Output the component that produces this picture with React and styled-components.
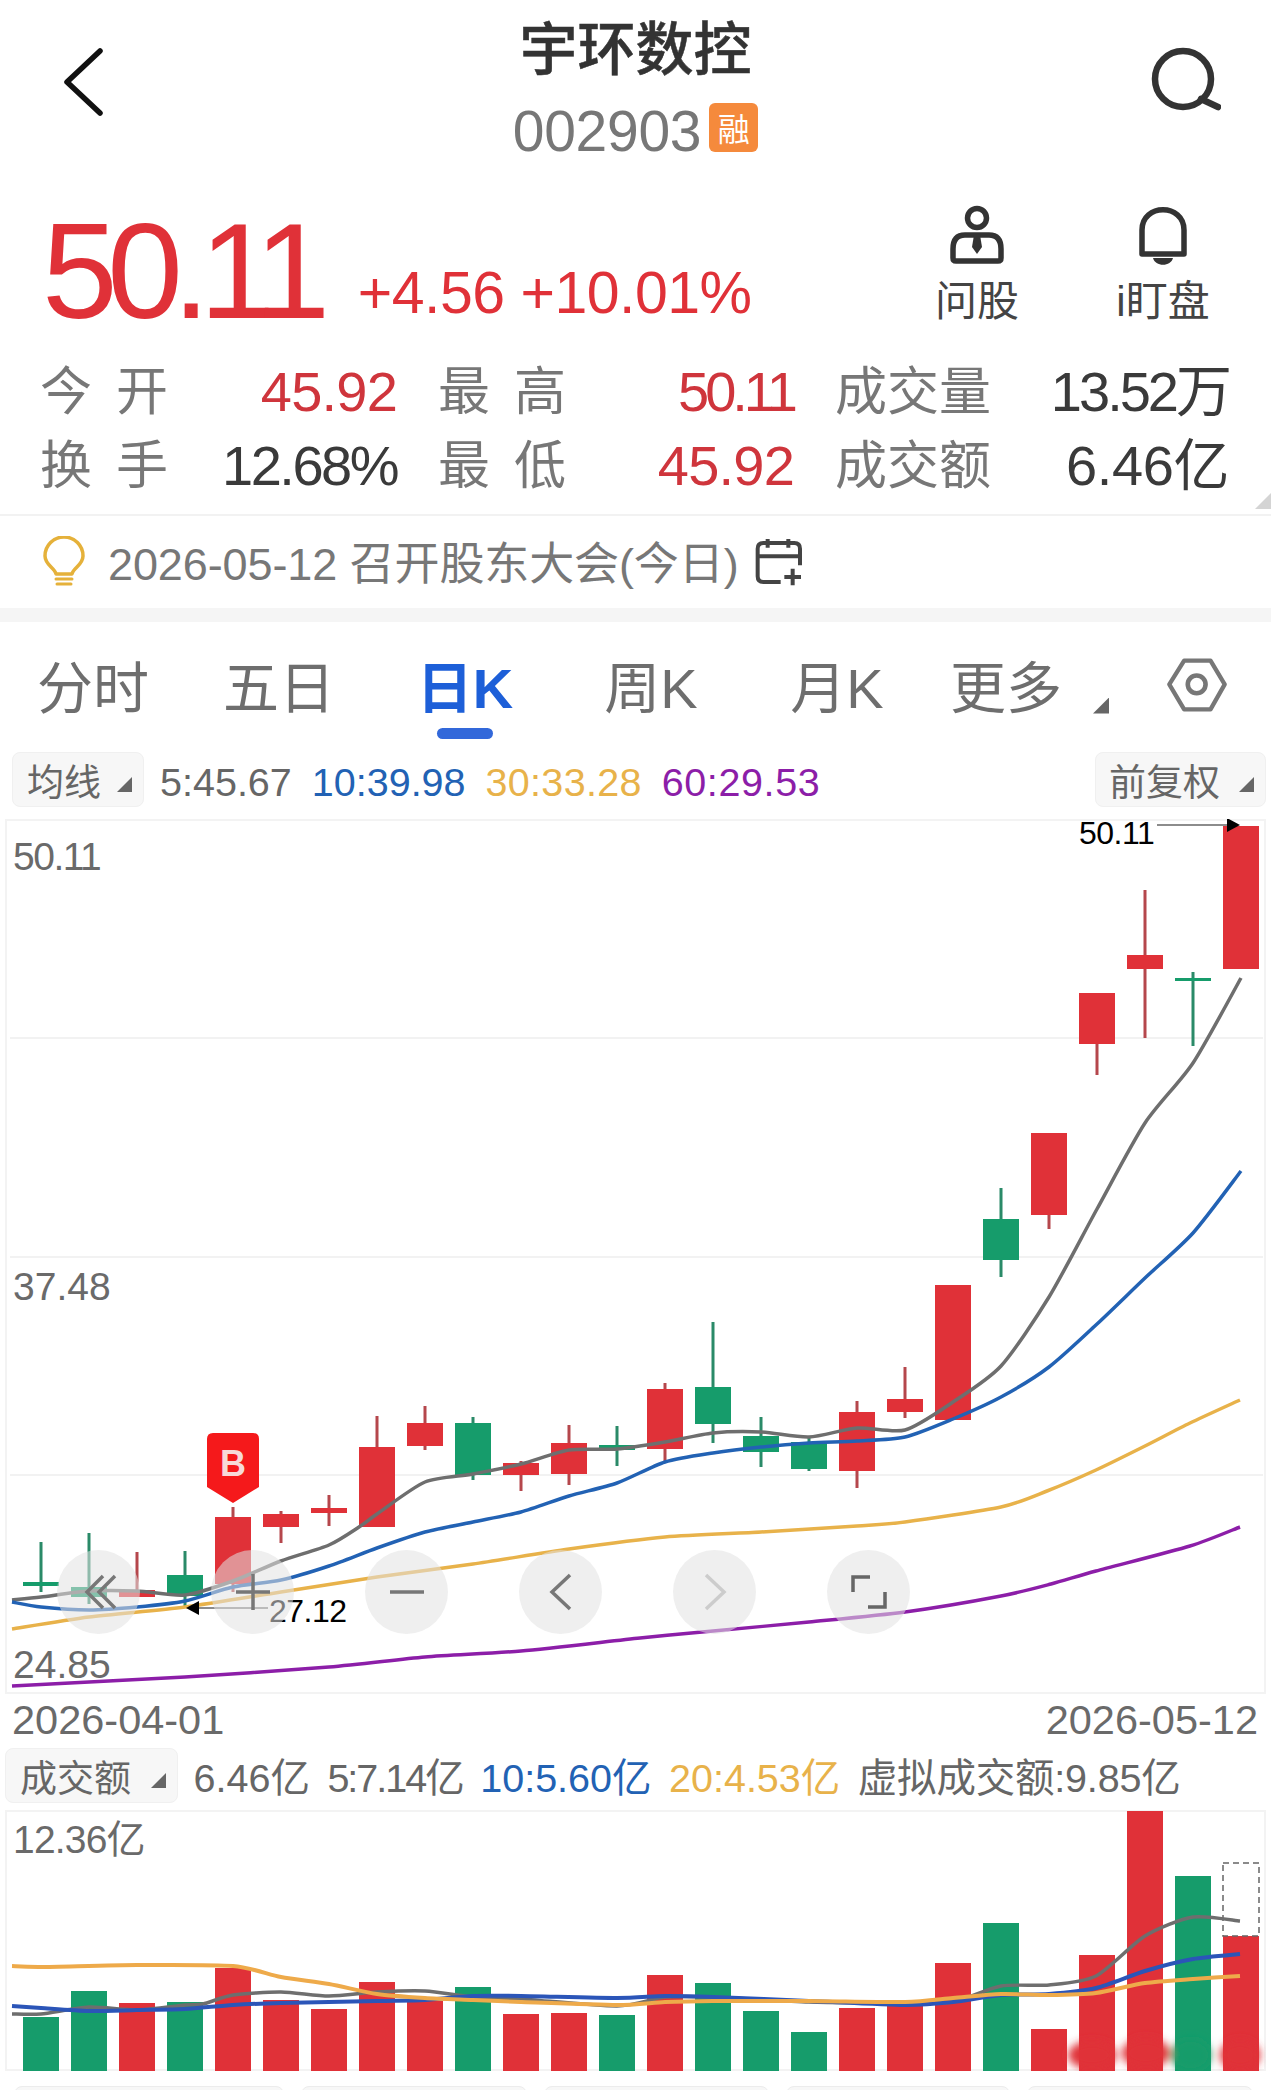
import React from 'react';
import styled, { createGlobalStyle } from 'styled-components';

const SANS = '"Liberation Sans", "Noto Sans CJK SC", sans-serif';
const RED = '#e03138';
const GREEN = '#169c6b';
const GRAY = '#6e6e6e';
const BLUE = '#2262b4';
const GOLD = '#e8b24a';
const PURPLE = '#8c1ea8';

// candle data in page pixels: [up, wickTop, bodyTop, bodyBottom, wickBottom]
const candles = [
  [0, 1543, 1583, 1587, 1593],
  [0, 1534, 1588, 1598, 1605],
  [1, 1553, 1591, 1598, 1598],
  [0, 1552, 1576, 1597, 1607],
  [1, 1508, 1518, 1585, 1593],
  [1, 1512, 1515, 1528, 1544],
  [1, 1496, 1509, 1514, 1527],
  [1, 1417, 1448, 1528, 1528],
  [1, 1407, 1424, 1447, 1451],
  [0, 1418, 1424, 1476, 1481],
  [1, 1462, 1464, 1476, 1492],
  [1, 1426, 1444, 1475, 1486],
  [0, 1427, 1446, 1451, 1467],
  [1, 1384, 1390, 1450, 1464],
  [0, 1323, 1388, 1425, 1444],
  [0, 1418, 1437, 1453, 1468],
  [0, 1437, 1443, 1470, 1472],
  [1, 1402, 1413, 1472, 1489],
  [1, 1368, 1400, 1413, 1419],
  [1, 1286, 1286, 1421, 1421],
  [0, 1189, 1220, 1261, 1278],
  [1, 1134, 1134, 1216, 1230],
  [1, 994, 994, 1045, 1076],
  [1, 891, 956, 970, 1039],
  [0, 973, 979, 982, 1047],
  [1, 827, 827, 970, 970],
];

// [up, top] for each volume bar
const bars = [
  [0, 2018], [0, 1992], [1, 2004], [0, 2003], [1, 1969], [1, 2001], [1, 2010],
  [1, 1983], [1, 2002], [0, 1988], [1, 2015], [1, 2014], [0, 2016], [1, 1976],
  [0, 1984], [0, 2012], [0, 2033], [1, 2009], [1, 2007], [1, 1964], [0, 1924],
  [1, 2030], [1, 1956], [1, 1812], [0, 1877], [1, 1937],
];

const priceLines = [
  { color: GRAY, width: 3.5, pts: [[12,1601],[41,1598],[89,1592],[137,1592],[185,1596],[233,1582],[281,1562],[329,1546],[359,1528],[377,1515],[425,1483],[473,1475],[521,1465],[569,1451],[617,1450],[665,1443],[713,1434],[761,1433],[809,1438],[857,1429],[905,1431],[953,1403],[1001,1367],[1049,1298],[1097,1210],[1145,1124],[1193,1064],[1241,979]] },
  { color: BLUE, width: 3.5, pts: [[12,1603],[41,1608],[89,1611],[137,1608],[185,1602],[233,1588],[281,1581],[329,1567],[377,1549],[425,1533],[473,1523],[521,1513],[569,1497],[617,1484],[665,1463],[713,1454],[761,1448],[809,1444],[857,1442],[905,1438],[953,1420],[1001,1398],[1049,1368],[1097,1325],[1145,1279],[1193,1234],[1241,1172]] },
  { color: GOLD, width: 3.5, pts: [[12,1630],[89,1618],[185,1608],[281,1593],[377,1578],[473,1565],[569,1550],[665,1538],[761,1533],[857,1527],[905,1523],[1001,1508],[1047,1492],[1096,1471],[1145,1447],[1190,1424],[1240,1401]] },
  { color: PURPLE, width: 3.5, pts: [[12,1687],[185,1678],[329,1668],[425,1658],[521,1652],[640,1639],[713,1632],[809,1623],[905,1613],[1001,1597],[1051,1585],[1096,1572],[1190,1547],[1240,1528]] },
];

const volumeLines = [
  { color: GRAY, width: 3.5, pts: [[12,2015],[41,2015],[89,2008],[137,2011],[185,2006],[203,2005],[233,1996],[281,1993],[329,1997],[377,1993],[425,1992],[473,1998],[521,2000],[617,2007],[665,1998],[713,1998],[809,2003],[905,2004],[953,2003],[1001,1987],[1049,1986],[1096,1977],[1145,1937],[1193,1918],[1240,1922]] },
  { color: '#2b55b8', width: 4, pts: [[12,2007],[41,2009],[89,2012],[137,2011],[185,2010],[233,2006],[281,2004],[377,2002],[425,2001],[473,1997],[521,1997],[617,1999],[665,1997],[713,1998],[809,2002],[905,2006],[953,2003],[1001,1996],[1049,1995],[1096,1989],[1145,1972],[1193,1960],[1240,1955]] },
  { color: '#eeaa4a', width: 4, pts: [[12,1967],[41,1968],[137,1966],[233,1967],[281,1978],[329,1985],[377,1995],[425,1999],[473,2001],[521,2003],[617,2006],[665,2003],[713,2002],[809,2002],[905,2003],[953,1999],[1001,1995],[1049,1996],[1096,1994],[1145,1984],[1193,1980],[1240,1977]] },
];

const smooth = pts => {
  let d = `M${pts[0][0]} ${pts[0][1]}`;
  for (let i = 0; i < pts.length - 1; i++) {
    const p0 = pts[i - 1] || pts[i];
    const p1 = pts[i];
    const p2 = pts[i + 1];
    const p3 = pts[i + 2] || p2;
    const c1x = p1[0] + (p2[0] - p0[0]) / 8;
    const c1y = p1[1] + (p2[1] - p0[1]) / 8;
    const c2x = p2[0] - (p3[0] - p1[0]) / 8;
    const c2y = p2[1] - (p3[1] - p1[1]) / 8;
    d += ` C${c1x} ${c1y} ${c2x} ${c2y} ${p2[0]} ${p2[1]}`;
  }
  return d;
};

const centerX = i => 41 + i * 48;

const GlobalStyle = createGlobalStyle`
  html, body {
    margin: 0;
    padding: 0;
    background: #fff;
  }
  body {
    font-family: ${SANS};
  }
`;

const Page = styled.div`
  width: 1271px;
  height: 2090px;
  overflow: hidden;
  background: #fff;
`;

const Header = styled.header`
  height: 160px;
  display: grid;
  grid-template-columns: 300px 1fr 300px;
  align-items: start;
`;

const HeaderSide = styled.div`
  display: flex;
  justify-content: ${p => (p.$end ? 'flex-end' : 'flex-start')};
  padding: 47px ${p => (p.$end ? '50px' : '0')} 0 ${p => (p.$end ? '0' : '62px')};
`;

const TitleBlock = styled.div`
  display: flex;
  flex-direction: column;
  align-items: center;
  padding-top: 16px;
`;

const Title = styled.h1`
  margin: 0;
  font-size: 58px;
  line-height: 68px;
  font-weight: 500;
  color: #333;
  -webkit-text-stroke: 0.5px #333;
`;

const CodeRow = styled.div`
  display: flex;
  align-items: center;
  gap: 8px;
  margin-top: 22px;
  height: 50px;
`;

const Code = styled.span`
  font-size: 57px;
  line-height: 50px;
  color: #777;
  letter-spacing: -0.3px;
`;

const Badge = styled.span`
  display: flex;
  align-items: center;
  justify-content: center;
  width: 49px;
  height: 49px;
  border-radius: 6px;
  background: #f58a3c;
  color: #fff;
  font-size: 32px;
  transform: translateY(-4px);
`;

const Quote = styled.section`
  height: 195px;
  display: flex;
  align-items: flex-start;
  padding-left: 42px;
`;

const PriceGroup = styled.div`
  display: flex;
  align-items: flex-end;
  gap: 38px;
  padding-top: 46px;
`;

const Price = styled.span`
  font-size: 136px;
  line-height: 130px;
  color: ${RED};
  letter-spacing: -10.5px;
`;

const Change = styled.span`
  font-size: 59px;
  line-height: 60px;
  margin-bottom: 13px;
  color: ${RED};
  letter-spacing: -0.5px;
`;

const Actions = styled.div`
  margin-left: auto;
  display: flex;
  gap: 96px;
  padding: 45px 60px 0 0;
`;

const Action = styled.div`
  display: flex;
  flex-direction: column;
  align-items: center;
  gap: 16px;
  font-size: 42px;
  line-height: 42px;
  color: #444;
  width: ${p => p.$w}px;
  svg {
    height: 60px;
  }
`;

const Stats = styled.section`
  position: relative;
  height: 161px;
  box-sizing: border-box;
  padding: 0 0 0 40px;
  border-bottom: 2px solid #f2f2f2;
  display: grid;
  grid-template-columns: 357px 356px 394px;
  grid-auto-rows: 74px;
  column-gap: 41px;
  align-items: center;
`;

const Stat = styled.div`
  display: flex;
  justify-content: space-between;
  align-items: center;
`;

const StatLabel = styled.span`
  font-size: 52px;
  line-height: 56px;
  color: #777;
  word-spacing: 9.5px;
`;

const StatValue = styled.span`
  font-size: 56px;
  line-height: 56px;
  letter-spacing: ${p => p.$track ?? -0.8}px;
  color: ${p => (p.$red ? '#cf353c' : '#3a3a3a')};
`;

const CornerMark = styled.i`
  position: absolute;
  right: 0;
  bottom: 5px;
  width: 16px;
  height: 16px;
  background: #d4d4d4;
  clip-path: polygon(100% 0, 100% 100%, 0 100%);
`;

const Notice = styled.div`
  height: 92px;
  display: flex;
  align-items: center;
  padding-left: 42px;
  font-size: 45px;
  color: #777;
`;

const NoticeText = styled.span`
  margin: 0 16px 0 22px;
  padding-top: 6px;
  white-space: nowrap;
  letter-spacing: -0.1px;
  line-height: 50px;
`;

const Divider = styled.div`
  height: 14px;
  background: #f5f5f5;
`;

const Tabs = styled.nav`
  height: 126px;
  box-sizing: border-box;
  padding: 7px 47px 0 0;
  display: grid;
  grid-template-columns: repeat(5, 186px) 1fr;
  align-items: center;
`;

const Tab = styled.div`
  position: relative;
  text-align: center;
  font-size: 56px;
  line-height: 60px;
  color: ${p => (p.$active ? '#1d5fd8' : '#6e6e6e')};
  font-weight: ${p => (p.$active ? 700 : 400)};

  ${p =>
    p.$active &&
    `
    &::after {
      content: '';
      position: absolute;
      left: 50%;
      bottom: -20px;
      margin-left: -28px;
      width: 56px;
      height: 11px;
      border-radius: 6px;
      background: #3268da;
    }
  `}
`;

const MoreCell = styled.div`
  display: flex;
  align-items: center;
  padding-left: 20px;
  font-size: 56px;
  line-height: 60px;
  color: #6e6e6e;
`;

const Caret = styled.i`
  display: block;
  width: ${p => p.$size}px;
  height: ${p => p.$size}px;
  background: #666;
  clip-path: polygon(100% 0, 100% 100%, 0 100%);
  align-self: flex-end;
  margin-left: ${p => p.$ml || 0}px;
  margin-bottom: ${p => p.$drop || 0}px;
`;

const HexWrap = styled.span`
  margin-left: auto;
  display: flex;
  transform: translate(3px, -4px);
`;

const LegendRow = styled.div`
  display: flex;
  align-items: center;
  gap: ${p => p.$gap}px;
  height: 55px;
  margin-top: ${p => p.$top}px;
  padding: 0 5px 0 ${p => p.$left}px;
`;

const Select = styled.div`
  display: flex;
  align-items: center;
  justify-content: space-between;
  box-sizing: border-box;
  width: ${p => p.$w}px;
  height: 55px;
  padding: 0 11px 0 ${p => p.$pad}px;
  margin-right: ${p => p.$mr || 0}px;
  margin-left: ${p => (p.$right ? 'auto' : '0')};
  background: #f7f7f7;
  border: 1px solid #f0f0f0;
  border-radius: 8px;
  font-size: 37px;
  color: #666;
  white-space: nowrap;
`;

const LegendValue = styled.span`
  font-size: 39.5px;
  line-height: 45px;
  padding-top: 5px;
  color: ${p => p.$color};
  letter-spacing: ${p => p.$track || 0}px;
  white-space: nowrap;
`;

const ChartPanel = styled.div`
  position: relative;
  width: 1261px;
  height: ${p => p.$h}px;
  margin: ${p => p.$mt}px 0 0 5px;
  box-shadow: inset 0 0 0 2px #f3f3f3;
  svg {
    display: block;
  }
`;

const AxisLabel = styled.span`
  position: absolute;
  left: 8px;
  top: ${p => p.$top}px;
  font-size: 39px;
  line-height: 44px;
  color: #6a6a6a;
  letter-spacing: ${p => p.$track || 0}px;
  white-space: nowrap;
`;

const PriceTag = styled.span`
  position: absolute;
  left: ${p => p.$left}px;
  top: ${p => p.$top}px;
  font-size: 32px;
  line-height: 28px;
  color: #000;
  letter-spacing: -0.5px;
`;

const BuyMark = styled.div`
  position: absolute;
  left: 202px;
  top: 614px;
  width: 52px;
  height: 70px;
  padding-top: 13px;
  box-sizing: border-box;
  text-align: center;
  background: #f5191b;
  color: #f7d9d9;
  font-size: 36px;
  line-height: 36px;
  font-weight: 700;
  clip-path: path('M6 0 H46 Q52 0 52 6 V54 L26 70 L0 54 V6 Q0 0 6 0 Z');
`;

const Controls = styled.div`
  position: absolute;
  left: 52px;
  top: 731px;
  display: flex;
  gap: 71px;
`;

const ControlButton = styled.div`
  width: 83px;
  height: 84px;
  border-radius: 50%;
  background: rgba(225, 225, 225, 0.55);
  display: flex;
  align-items: center;
  justify-content: center;
  svg {
    overflow: visible;
  }
`;

const DateRow = styled.div`
  display: flex;
  justify-content: space-between;
  height: 50px;
  padding: 4px 13px 0 12px;
  box-sizing: border-box;
  font-size: 41.5px;
  line-height: 44px;
  color: #6a6a6a;
`;

const FooterRow = styled.div`
  display: flex;
  gap: 17px;
  margin-top: 15px;
  padding-left: 14px;
`;

const FooterPill = styled.div`
  width: ${p => p.$w}px;
  height: 40px;
  flex: none;
  box-sizing: border-box;
  background: #f7f7f7;
  border: 1px solid #ececec;
  border-radius: 8px;
`;

const BackIcon = () => (
  <svg width="42" height="70" viewBox="0 0 42 70">
    <path d="M38 4 L5 35 L38 66" fill="none" stroke="#111" strokeWidth="5.5" strokeLinecap="round" strokeLinejoin="round" />
  </svg>
);

const SearchIcon = () => (
  <svg width="70" height="66" viewBox="0 0 70 66">
    <circle cx="32" cy="32" r="28" fill="none" stroke="#333" strokeWidth="6.5" />
    <path d="M50 52 L67 60" fill="none" stroke="#333" strokeWidth="6.5" strokeLinecap="round" />
  </svg>
);

const PersonIcon = () => (
  <svg width="56" height="60" viewBox="0 0 56 60">
    <circle cx="28" cy="13" r="9.5" fill="none" stroke="#333" strokeWidth="5.5" />
    <path d="M16 30 H40 Q52 30 52 44 V53 Q52 56 49 56 H7 Q4 56 4 53 V44 Q4 30 16 30 Z" fill="none" stroke="#333" strokeWidth="5.5" />
    <path d="M25 30 H31 L33 42 L28 49 L23 42 Z" fill="#333" />
  </svg>
);

const BellIcon = () => (
  <svg width="48" height="60" viewBox="0 0 48 60">
    <path d="M3 48 V24 C3 -3 45 -3 45 24 V48 Z" transform="translate(0 1)" fill="none" stroke="#333" strokeWidth="5.5" strokeLinejoin="round" />
    <path d="M14 53 H34 C32 62 16 62 14 53 Z" fill="#333" />
  </svg>
);

const BulbIcon = () => (
  <svg width="44" height="52" viewBox="0 0 44 52">
    <path d="M14 38 C13 32 3 29 3 20 A18.5 18.5 0 0 1 41 20 C41 29 31 32 30 38 Z" fill="none" stroke="#e5b13a" strokeWidth="3.5" strokeLinejoin="round" />
    <path d="M14 43 H30 M15 48 H29" stroke="#e5b13a" strokeWidth="3" strokeLinecap="round" />
  </svg>
);

const CalendarIcon = () => (
  <svg width="50" height="50" viewBox="30 20 150 150">
    <path d="M107 155 H55 Q38 155 38 138 V55 Q38 38 55 38 H148 Q165 38 165 55 V105 M38 78 H165 M68 26 V52 M130 26 V52 M143 115 V165 M118 140 H168" fill="none" stroke="#444" strokeWidth="12" />
  </svg>
);

const HexIcon = () => (
  <svg width="60" height="56" viewBox="228 20 182 168">
    <path d="M235 102 L280 30 H360 L403 102 L360 178 H280 Z" fill="none" stroke="#777" strokeWidth="13" strokeLinejoin="round" />
    <circle cx="318" cy="102" r="27" fill="none" stroke="#777" strokeWidth="14" />
  </svg>
);

const controlIcons = [
  { color: '#777', d: 'M4 -16 L-12 0 L4 16 M16 -16 L0 0 L16 16' },
  { color: '#777', d: 'M0 -18 V18 M-17 0 H17' },
  { color: '#777', d: 'M-17 0 H17' },
  { color: '#777', d: 'M9 -17 L-9 0 L9 17' },
  { color: '#ccc', d: 'M-9 -17 L9 0 L-9 17' },
  { color: '#666', d: 'M1 -15 H-16 V0 M-1 15 H16 V0' },
];

const PriceChart = () => (
  <ChartPanel $h={875} $mt={12}>
    <svg width="1261" height="875" viewBox="5 820 1261 875">
      {[1039, 1258, 1476].map(y => (
        <line key={y} x1="10" x2="1263" y1={y} y2={y} stroke="#eeeeee" strokeWidth="1.5" />
      ))}
      {candles.map(([up, high, top, bottom, low], i) => (
        <g key={i}>
          <rect x={centerX(i) - 1.5} y={high} width="3" height={low - high} fill={up ? '#b5474c' : '#2a8a68'} />
          <rect x={centerX(i) - 18} y={top} width="36" height={bottom - top} fill={up ? RED : GREEN} />
        </g>
      ))}
      {priceLines.map(line => (
        <path key={line.color} d={smooth(line.pts)} fill="none" stroke={line.color} strokeWidth={line.width} />
      ))}
      <path d="M1157 826 H1230" stroke="#666" strokeWidth="1.5" />
      <path d="M1227 819 L1240 826 L1227 833 Z" fill="#000" />
      <path d="M196 1609 H268" stroke="#666" strokeWidth="1.5" />
      <path d="M199 1602 L186 1609 L199 1616 Z" fill="#000" />
    </svg>
    <AxisLabel $top={16} $track={-1.5}>50.11</AxisLabel>
    <AxisLabel $top={446}>37.48</AxisLabel>
    <AxisLabel $top={824}>24.85</AxisLabel>
    <PriceTag $left={1074} $top={0}>50.11</PriceTag>
    <PriceTag $left={264} $top={778}>27.12</PriceTag>
    <BuyMark>B</BuyMark>
    <Controls>
      {controlIcons.map(icon => (
        <ControlButton key={icon.d}>
          <svg width="40" height="40" viewBox="-20 -20 40 40">
            <path d={icon.d} fill="none" stroke={icon.color} strokeWidth="3.5" />
          </svg>
        </ControlButton>
      ))}
    </Controls>
  </ChartPanel>
);

const VolumeChart = () => (
  <ChartPanel $h={261} $mt={7}>
    <svg width="1261" height="261" viewBox="5 1811 1261 261">
      <defs>
        <filter id="smudge" x="-30%" y="-30%" width="160%" height="160%">
          <feGaussianBlur stdDeviation="4" />
        </filter>
      </defs>
      {bars.map(([up, top], i) => (
        <rect key={i} x={centerX(i) - 18} y={top} width="36" height={2072 - top} fill={up ? RED : GREEN} />
      ))}
      <rect x="1223" y="1864" width="36" height="73" fill="none" stroke="#666" strokeWidth="1.5" strokeDasharray="6 4" />
      {volumeLines.map(line => (
        <path key={line.color} d={smooth(line.pts)} fill="none" stroke={line.color} strokeWidth={line.width} />
      ))}
      <g filter="url(#smudge)">
        <ellipse cx="1092" cy="2056" rx="24" ry="14" fill={RED} />
        <ellipse cx="1146" cy="2054" rx="24" ry="15" fill={RED} />
        <ellipse cx="1191" cy="2056" rx="20" ry="16" fill={GREEN} />
        <ellipse cx="1240" cy="2056" rx="20" ry="15" fill={RED} />
      </g>
    </svg>
    <AxisLabel $top={8} $track={-0.8}>12.36亿</AxisLabel>
  </ChartPanel>
);

const App = () => (
  <Page>
    <GlobalStyle />
    <Header>
      <HeaderSide>
        <BackIcon />
      </HeaderSide>
      <TitleBlock>
        <Title>宇环数控</Title>
        <CodeRow>
          <Code>002903</Code>
          <Badge>融</Badge>
        </CodeRow>
      </TitleBlock>
      <HeaderSide $end>
        <SearchIcon />
      </HeaderSide>
    </Header>

    <Quote>
      <PriceGroup>
        <Price>50.11</Price>
        <Change>+4.56 +10.01%</Change>
      </PriceGroup>
      <Actions>
        <Action $w={84}>
          <PersonIcon />
          问股
        </Action>
        <Action $w={96}>
          <BellIcon />
          i盯盘
        </Action>
      </Actions>
    </Quote>

    <Stats>
      <Stat>
        <StatLabel>今 开</StatLabel>
        <StatValue $red>45.92</StatValue>
      </Stat>
      <Stat>
        <StatLabel>最 高</StatLabel>
        <StatValue $red $track={-4}>50.11</StatValue>
      </Stat>
      <Stat>
        <StatLabel>成交量</StatLabel>
        <StatValue $track={-3}>13.52万</StatValue>
      </Stat>
      <Stat>
        <StatLabel>换 手</StatLabel>
        <StatValue $track={-2.5}>12.68%</StatValue>
      </Stat>
      <Stat>
        <StatLabel>最 低</StatLabel>
        <StatValue $red>45.92</StatValue>
      </Stat>
      <Stat>
        <StatLabel>成交额</StatLabel>
        <StatValue $track={-0.4}>6.46亿</StatValue>
      </Stat>
      <CornerMark />
    </Stats>

    <Notice>
      <BulbIcon />
      <NoticeText>2026-05-12 召开股东大会(今日)</NoticeText>
      <CalendarIcon />
    </Notice>
    <Divider />

    <Tabs>
      <Tab>分时</Tab>
      <Tab>五日</Tab>
      <Tab $active>日K</Tab>
      <Tab>周K</Tab>
      <Tab>月K</Tab>
      <MoreCell>
        更多
        <Caret $size={16} $drop={5} $ml={31} />
        <HexWrap>
          <HexIcon />
        </HexWrap>
      </MoreCell>
    </Tabs>

    <LegendRow $gap={20} $top={4} $left={12}>
      <Select $w={132} $pad={14} $mr={-4}>
        均线
        <Caret $size={15} $drop={14} />
      </Select>
      <LegendValue $color="#666">5:45.67</LegendValue>
      <LegendValue $color={BLUE}>10:39.98</LegendValue>
      <LegendValue $color={GOLD} $track={0.3}>30:33.28</LegendValue>
      <LegendValue $color={PURPLE} $track={0.6}>60:29.53</LegendValue>
      <Select $w={171} $pad={13} $right>
        前复权
        <Caret $size={15} $drop={14} />
      </Select>
    </LegendRow>

    <PriceChart />

    <DateRow>
      <span>2026-04-01</span>
      <span>2026-05-12</span>
    </DateRow>

    <LegendRow $gap={17.5} $top={4} $left={5}>
      <Select $w={173} $pad={14} $mr={-2}>
        成交额
        <Caret $size={15} $drop={14} />
      </Select>
      <LegendValue $color="#666">6.46亿</LegendValue>
      <LegendValue $color="#666" $track={-2}>5:7.14亿</LegendValue>
      <LegendValue $color={BLUE}>10:5.60亿</LegendValue>
      <LegendValue $color={GOLD}>20:4.53亿</LegendValue>
      <LegendValue $color="#666" $track={-0.2}>虚拟成交额:9.85亿</LegendValue>
    </LegendRow>

    <VolumeChart />

    <FooterRow>
      <FooterPill $w={270} />
      <FooterPill $w={226} />
      <FooterPill $w={225} />
      <FooterPill $w={224} />
      <FooterPill $w={226} />
    </FooterRow>
  </Page>
);

export default App;
